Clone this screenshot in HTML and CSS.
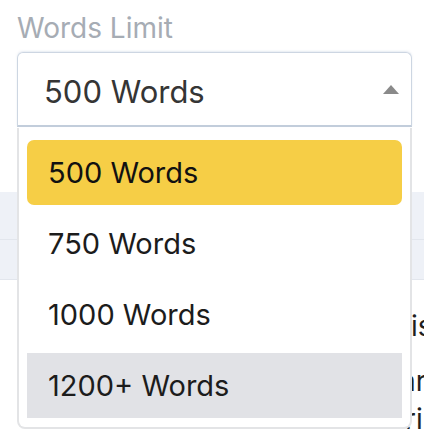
FILE: index.html
```html
<!DOCTYPE html>
<html lang="en">
<head>
<meta charset="utf-8">
<title>Words Limit</title>
<link rel="stylesheet" href="styles.css">
</head>
<body>
<div class="page">
  <div class="field">
    <div class="label">Words Limit</div>
    <div class="select">
      <span class="select-value">500 Words</span>
      <svg class="caret" width="16" height="9" viewBox="0 0 16 9"><polygon points="8,0 16,9 0,9" fill="#8a8a8a"/></svg>
    </div>
  </div>
  <div class="bands">
    <div class="band"></div>
    <div class="band"></div>
  </div>
  <div class="behind">
    <p class="behind-line first">is</p>
    <p class="behind-line second">ar</p>
    <p class="behind-line third">ri</p>
  </div>
  <ul class="menu">
    <li class="item active">500 Words</li>
    <li class="item">750 Words</li>
    <li class="item">1000 Words</li>
    <li class="item hover">1200+ Words</li>
  </ul>
</div>
</body>
</html>
```
FILE: styles.css
```css
html, body {
  margin: 0;
  padding: 0;
  background: #ffffff;
  overflow: hidden;
  height: 430px;
}
body {
  font-family: Inter, "Noto Sans", "Liberation Sans", sans-serif;
}
.page {
  position: relative;
  width: 424px;
  height: 430px;
  overflow: hidden;
}
.field {
  padding: 12px 12px 0 17px;
}
.label {
  font-size: 28px;
  line-height: 32px;
  color: #a6acb4;
  margin-bottom: 8px;
}
.select {
  box-sizing: border-box;
  height: 75px;
  border: 1px solid #cdd6e2;
  border-bottom: 2px solid #c2cddb;
  border-radius: 6px 6px 0 0;
  display: flex;
  align-items: center;
  justify-content: space-between;
  padding: 4px 12px 0 26px;
  box-shadow: 0 -1px 2px rgba(180, 195, 215, 0.35);
}
.select-value {
  font-size: 31px;
  line-height: 37px;
  color: #353535;
}
.caret {
  display: block;
  margin-top: -4px;
}
.bands {
  margin-top: 65px;
}
.band {
  height: 47px;
  background: #eef1f7;
  border-bottom: 1px solid #e2e6ed;
}
.band + .band {
  height: 39px;
}
.behind {
  white-space: nowrap;
  font-size: 28px;
  color: #1f1f1f;
}
.behind-line {
  margin: 0;
  line-height: 38px;
}
.behind-line.first {
  margin-top: 27px;
  padding-left: 411px;
}
.behind-line.second {
  margin-top: 17px;
  padding-left: 400px;
}
.behind-line.third {
  padding-left: 405px;
}
.menu {
  position: absolute;
  top: 128px;
  left: 17px;
  width: 395px;
  box-sizing: border-box;
  margin: 0;
  list-style: none;
  background: #ffffff;
  border: 2px solid #e3e4e6;
  border-top: none;
  border-radius: 0 0 8px 8px;
  padding: 12px 8px 9px;
  display: flex;
  flex-direction: column;
  gap: 6px;
}
.item {
  height: 65px;
  display: flex;
  align-items: center;
  padding-left: 21px;
  border-radius: 7px;
  font-size: 29px;
  line-height: 35px;
  color: #1c1c1c;
}
.item.active {
  background: #f6ce46;
  color: #111111;
}
.item.hover {
  background: #e1e2e6;
  border-radius: 0;
}
```
